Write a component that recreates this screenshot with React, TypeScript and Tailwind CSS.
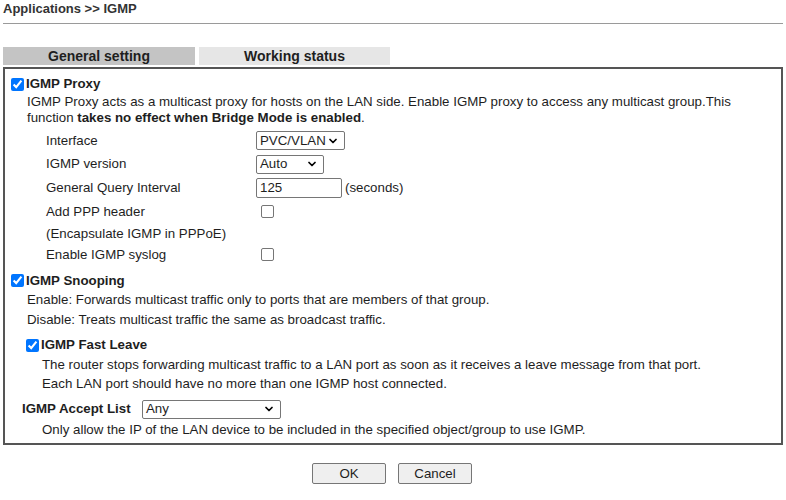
import { ChevronDown } from "lucide-react";

const Select = ({ value, width }: { value: string; width: string }) => (
  <div
    className={`flex h-[19px] items-center justify-between border border-[#767676] bg-white pl-[3px] pr-[5px] rounded-[2px] ${width}`}
  >
    <span>{value}</span>
    <ChevronDown size={12} strokeWidth={3.5} className="text-black" />
  </div>
);

const Row = ({
  label,
  height,
  children,
}: {
  label: string;
  height: string;
  children?: React.ReactNode;
}) => (
  <div className={`flex items-center ${height}`}>
    <div className="w-[251px] shrink-0 whitespace-nowrap pl-[41px]">{label}</div>
    <div className="flex items-center">{children}</div>
  </div>
);

export default function App() {
  return (
    <div
      className="w-[786px] h-[500px] bg-white text-[13.3px] text-[#1e1e1e]"
      style={{ fontFamily: '"Liberation Sans", Arial, sans-serif' }}
    >
      <div className="h-[23px] pl-[3px] pt-[1px] text-[13px] font-bold leading-[15px] text-[#333]">
        Applications &gt;&gt; IGMP
      </div>
      <div className="mx-[3px] h-px bg-[#9a9a9a]" />

      <div className="mt-[23px] flex gap-[4px] pl-[3px] text-[14px]">
        <div className="flex h-[18px] w-[192px] items-center justify-center bg-[#c4c4c4] font-bold">
          General setting
        </div>
        <div className="flex h-[18px] w-[191px] items-center justify-center bg-[#e6e6e6] font-bold">
          Working status
        </div>
      </div>

      <div className="mx-[3px] mt-[2px] w-[780px] border-2 border-[#555] pt-[5px] pb-[3px]">
        <label className="flex h-[20px] items-center gap-[2px] pl-[6px] font-bold">
          <input type="checkbox" defaultChecked className="m-0 h-[13px] w-[13px]" />
          <span>IGMP Proxy</span>
        </label>
        <div className="pl-[22px] leading-[16px]">
          IGMP Proxy acts as a multicast proxy for hosts on the LAN side. Enable IGMP proxy to access any multicast group.This
          <br />
          function <span className="font-bold">takes no effect when Bridge Mode is enabled</span>.
        </div>

        <div className="mt-[3px]">
          <Row label="Interface" height="h-[23px]">
            <Select value="PVC/VLAN" width="w-[89px]" />
          </Row>
          <Row label="IGMP version" height="h-[24px]">
            <Select value="Auto" width="w-[68px]" />
          </Row>
          <Row label="General Query Interval" height="h-[24px]">
            <div className="flex h-[20px] w-[86px] items-center border border-[#767676] rounded-[2px] pl-[3px]">
              125
            </div>
            <span className="ml-[3px]">(seconds)</span>
          </Row>
          <Row label="Add PPP header" height="h-[23px]">
            <div className="ml-[5px] h-[13px] w-[13px] rounded-[2px] border border-[#767676]" />
          </Row>
          <Row label="(Encapsulate IGMP in PPPoE)" height="h-[21px]" />
          <Row label="Enable IGMP syslog" height="h-[21px]">
            <div className="ml-[5px] h-[13px] w-[13px] rounded-[2px] border border-[#767676]" />
          </Row>
        </div>

        <label className="mt-[6px] flex h-[19px] items-center gap-[2px] pl-[6px] font-bold">
          <input type="checkbox" defaultChecked className="m-0 h-[13px] w-[13px]" />
          <span>IGMP Snooping</span>
        </label>
        <div className="pl-[22px] leading-[20px]">
          <div>Enable: Forwards multicast traffic only to ports that are members of that group.</div>
          <div>Disable: Treats multicast traffic the same as broadcast traffic.</div>
        </div>

        <label className="mt-[5px] flex h-[20px] items-center gap-[2px] pl-[21px] font-bold">
          <input type="checkbox" defaultChecked className="m-0 h-[13px] w-[13px]" />
          <span>IGMP Fast Leave</span>
        </label>
        <div className="pl-[37px] leading-[19px]">
          <div>The router stops forwarding multicast traffic to a LAN port as soon as it receives a leave message from that port.</div>
          <div>Each LAN port should have no more than one IGMP host connected.</div>
        </div>

        <div className="mt-[5px] flex h-[22px] items-center pl-[17px]">
          <span className="w-[120px] font-bold">IGMP Accept List</span>
          <Select value="Any" width="w-[139px]" />
        </div>
        <div className="h-[20px] pl-[37px] leading-[20px]">
          Only allow the IP of the LAN device to be included in the specified object/group to use IGMP.
        </div>
      </div>

      <div className="mt-[18px] flex justify-center gap-[12px] pr-[2px]">
        <button className="h-[21px] w-[74px] rounded-[2px] border border-[#767676] bg-[#efefef] text-[13.3px]">
          OK
        </button>
        <button className="h-[21px] w-[74px] rounded-[2px] border border-[#767676] bg-[#efefef] text-[13.3px]">
          Cancel
        </button>
      </div>
    </div>
  );
}
